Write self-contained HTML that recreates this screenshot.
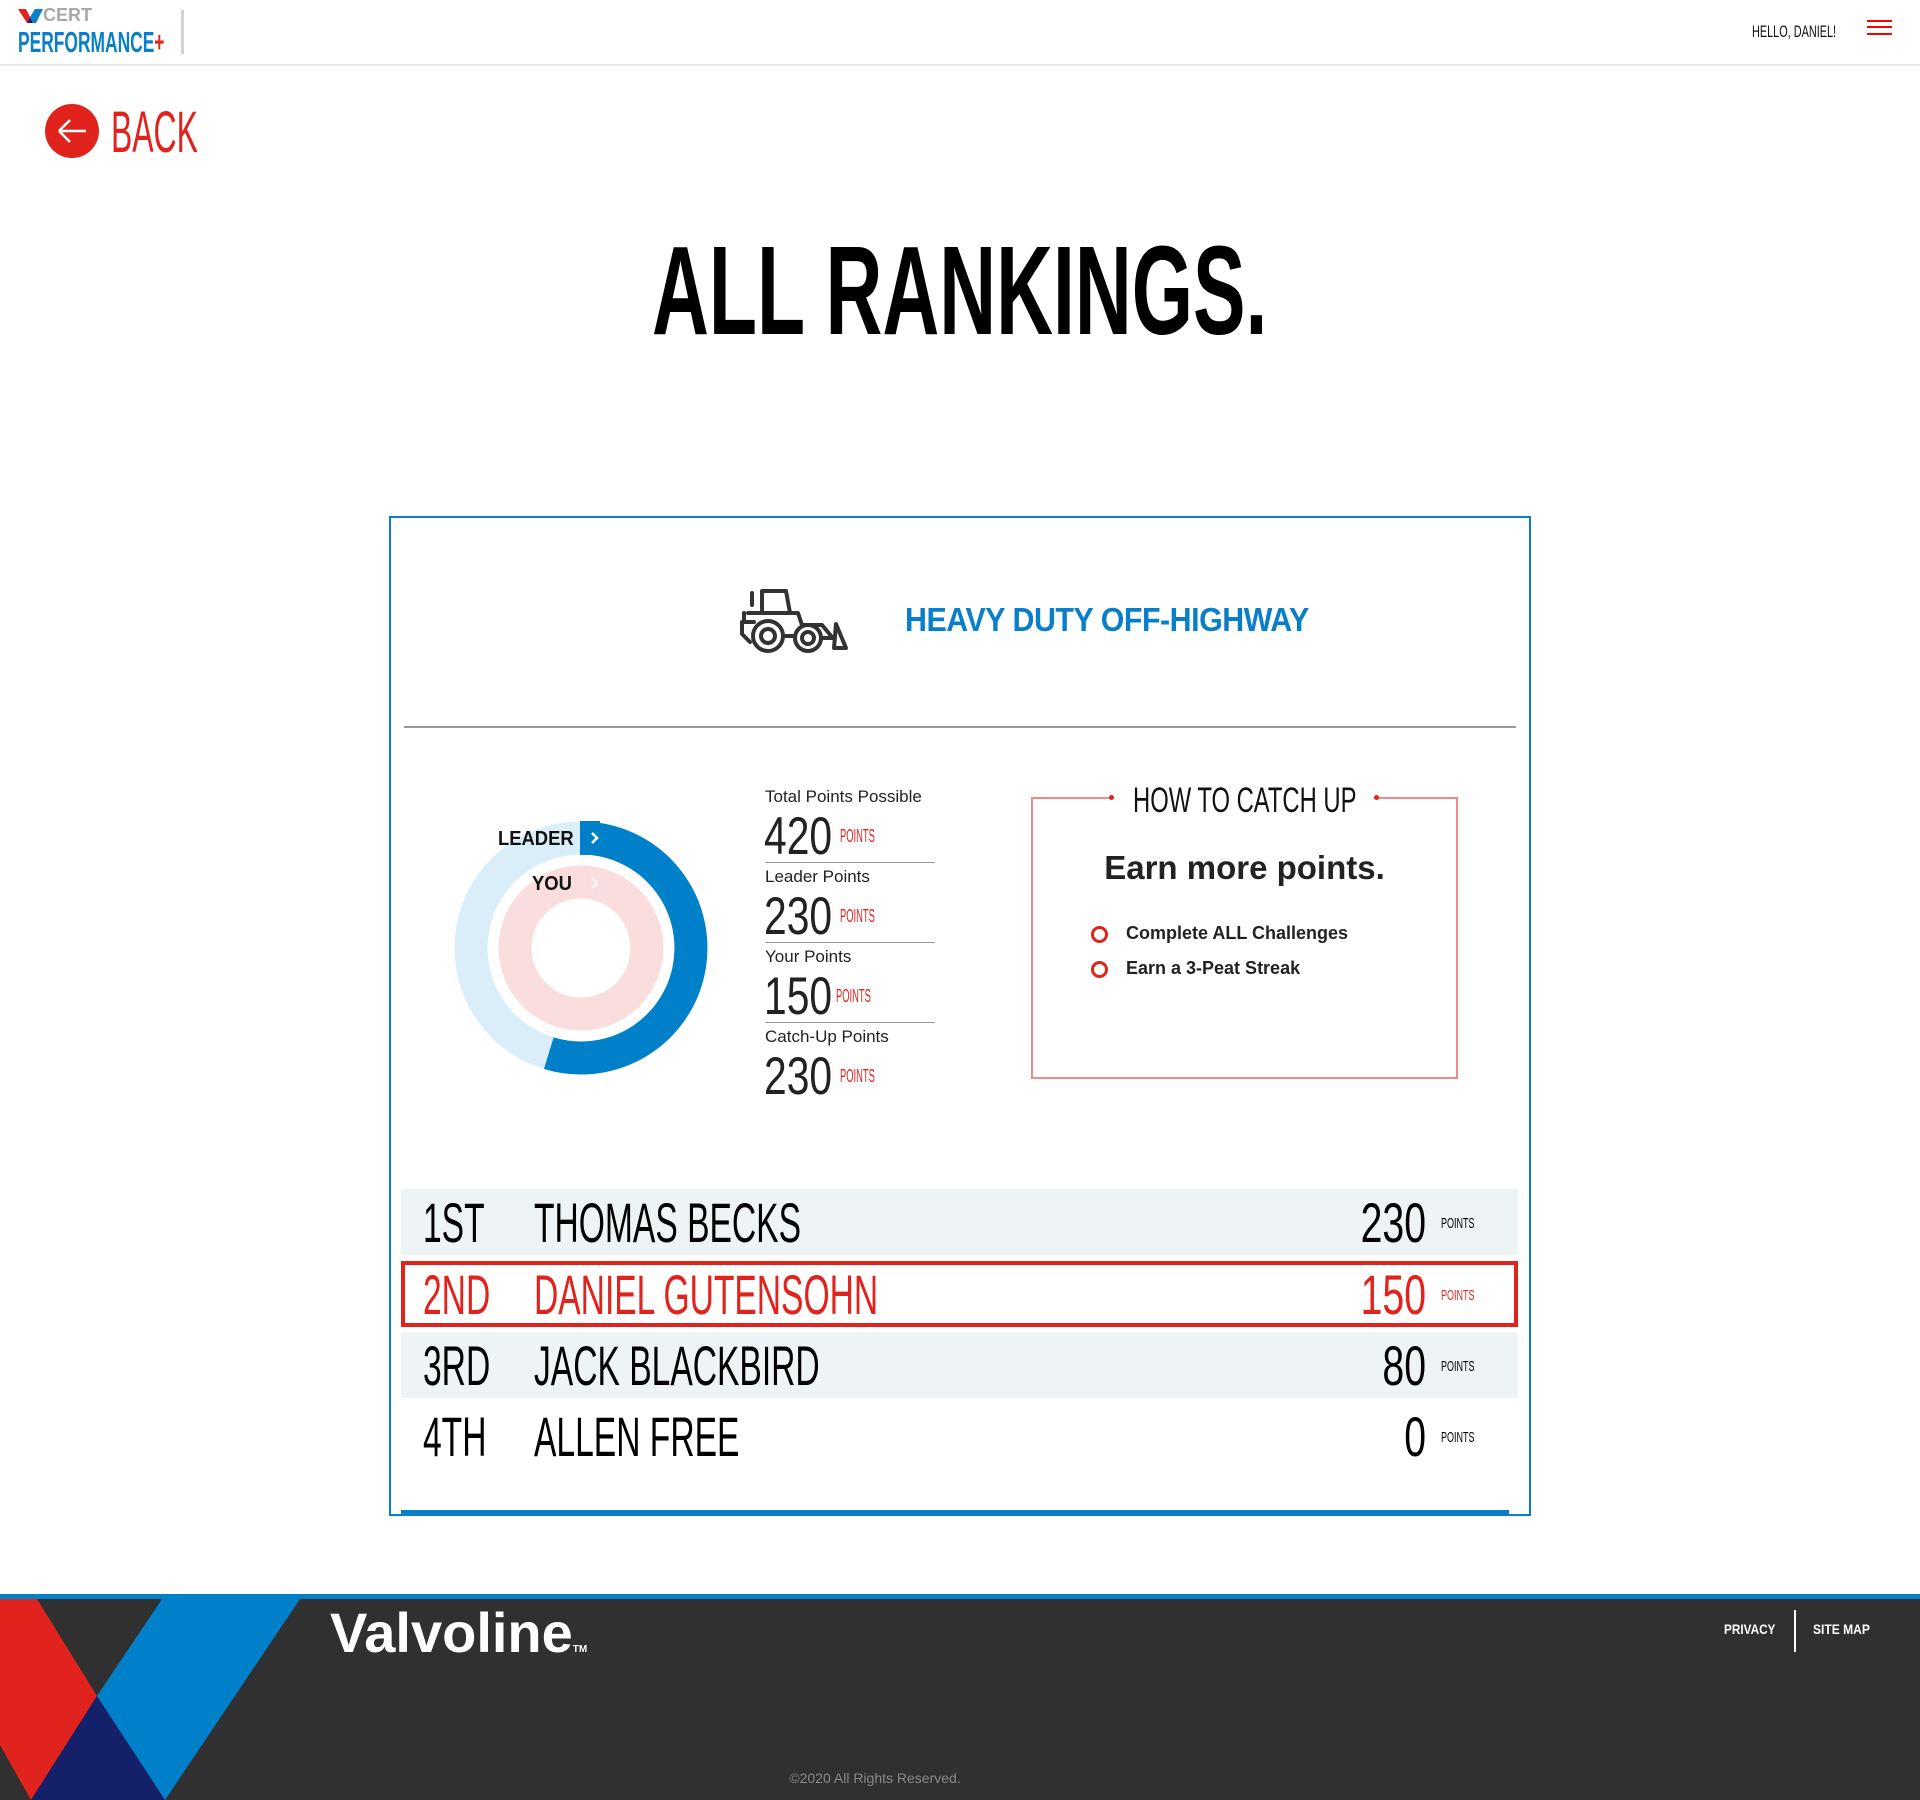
<!DOCTYPE html>
<html><head><meta charset="utf-8"><style>
*{margin:0;padding:0;box-sizing:border-box}
body{width:1920px;height:1800px;position:relative;background:#fff;font-family:"Liberation Sans",sans-serif;overflow:hidden;color:#111}
.a{position:absolute;white-space:nowrap}
.l{transform-origin:left top}
.r{transform-origin:right top}
.rk{font-size:56px;transform:scaleX(.6);line-height:1}
.nm{font-size:56px;transform:scaleX(.6);line-height:1;text-align:right;width:300px}
.pp{font-size:15px;transform:scaleX(.6);line-height:1}
.sn{font-size:53px;transform:scaleX(.77);line-height:1;color:#222}
.sp{font-size:18px;transform:scaleX(.52);line-height:1;color:#e0231c}
.sl{font-size:17px;color:#222}
</style></head><body>
<!-- header -->
<div class="a" style="left:0;top:64px;width:1920px;height:2px;background:#e8e8e8"></div>
<svg class="a" style="left:18px;top:9px" width="26" height="14" viewBox="0 0 26 14"><polygon points="0,0 8,0 12,8 9,14" fill="#e0231c"/><polygon points="12,8 9,14 15,14" fill="#14206a"/><polygon points="17,0 25,0 18,14 15,14 12,8" fill="#0a7fc9"/></svg>
<div class="a" style="left:43px;top:5px;font-size:18px;font-weight:bold;color:#a8a8a8">CERT</div>
<div class="a l" style="left:18px;top:29px;font-size:29px;font-weight:bold;color:#0a7fc9;transform:scaleX(.6);line-height:1">PERFORMANCE<span style="color:#e0231c">+</span></div>
<div class="a" style="left:181px;top:10px;width:3px;height:44px;background:#d4d4d4"></div>
<div class="a l" style="left:1752px;top:23px;font-size:17px;color:#111;transform:scaleX(.64);line-height:1">HELLO, DANIEL!</div>
<div class="a" style="left:1867px;top:20px;width:25px;height:2px;background:#f00"></div>
<div class="a" style="left:1867px;top:26px;width:25px;height:2px;background:#f00"></div>
<div class="a" style="left:1867px;top:33px;width:25px;height:2px;background:#f00"></div>
<!-- back -->
<svg class="a" style="left:45px;top:104px" width="54" height="54" viewBox="0 0 54 54"><circle cx="27" cy="27" r="27" fill="#e0231c"/><path d="M14 27H41M14 27L25 16M14 27L25 38" stroke="#fff" stroke-width="2.5" fill="none"/></svg>
<div class="a l" style="left:111px;top:104px;font-size:58px;color:#e0231c;transform:scaleX(.55);line-height:1">BACK</div>
<!-- title -->
<div class="a l" style="left:652px;top:228px;font-size:126px;font-weight:bold;color:#000;transform:scaleX(.625);line-height:1">ALL RANKINGS.</div>
<!-- card -->
<div class="a" style="left:389px;top:516px;width:1142px;height:1000px;border:2px solid #0a7fc9"></div>
<svg class="a" style="left:738px;top:582px" width="116" height="72" viewBox="0 0 116 72" fill="none" stroke="#333" stroke-width="4" stroke-linejoin="round" stroke-linecap="round"><path d="M14 11v12M24 9h24l4 22M24 9v22h28M10 31h50l4 12h20l10 12M4 40h12M4 40v12l8 8M6 31v9"/><circle cx="30" cy="54" r="15"/><circle cx="30" cy="54" r="7"/><circle cx="70" cy="56" r="13"/><circle cx="70" cy="56" r="6"/><path d="M46 54h10M84 56h12M98 42l10 24H96z"/></svg>
<div class="a l" style="left:905px;top:601px;font-size:33px;font-weight:bold;color:#0a7fc9;letter-spacing:-0.5px;transform:scaleX(.92)">HEAVY DUTY OFF-HIGHWAY</div>
<div class="a" style="left:404px;top:726px;width:1112px;height:2px;background:#999"></div>
<!-- donut -->
<svg class="a" style="left:450px;top:817px" width="262" height="262" viewBox="0 0 262 262">
<circle cx="131" cy="131" r="110" fill="none" stroke="#d9eef8" stroke-width="33"/>
<path d="M131 21 A110 110 0 1 1 98.8 236.2" fill="none" stroke="#0080c8" stroke-width="33"/>
<circle cx="131" cy="131" r="66" fill="none" stroke="#fadedd" stroke-width="33"/>
<rect x="130" y="4" width="20" height="34" fill="#0080c8"/>
<path d="M142 16l5 5-5 5" stroke="#fff" stroke-width="2.5" fill="none"/>
<path d="M142 61l5 5-5 5" stroke="#fff" stroke-width="2" fill="none"/>
</svg>
<div class="a l" style="left:498px;top:828px;font-size:20px;font-weight:bold;color:#111;transform:scaleX(.92)">LEADER</div>
<div class="a l" style="left:532px;top:873px;font-size:20px;font-weight:bold;color:#111;transform:scaleX(.92)">YOU</div>
<!-- stats -->
<div class="a sl" style="left:765px;top:787px">Total Points Possible</div>
<div class="a l sn" style="left:764px;top:810px">420</div>
<div class="a l sp" style="left:840px;top:827px">POINTS</div>
<div class="a" style="left:765px;top:862px;width:170px;height:1px;background:#999"></div>
<div class="a sl" style="left:765px;top:867px">Leader Points</div>
<div class="a l sn" style="left:764px;top:890px">230</div>
<div class="a l sp" style="left:840px;top:907px">POINTS</div>
<div class="a" style="left:765px;top:942px;width:170px;height:1px;background:#999"></div>
<div class="a sl" style="left:765px;top:947px">Your Points</div>
<div class="a l sn" style="left:764px;top:970px">150</div>
<div class="a l sp" style="left:836px;top:987px">POINTS</div>
<div class="a" style="left:765px;top:1022px;width:170px;height:1px;background:#999"></div>
<div class="a sl" style="left:765px;top:1027px">Catch-Up Points</div>
<div class="a l sn" style="left:764px;top:1050px">230</div>
<div class="a l sp" style="left:840px;top:1067px">POINTS</div>
<!-- catch up -->
<div class="a" style="left:1031px;top:797px;width:427px;height:282px;border:2px solid #f08a8a;border-top:none"></div>
<div class="a" style="left:1031px;top:797px;width:80px;height:2px;background:#f08a8a"></div>
<div class="a" style="left:1376px;top:797px;width:82px;height:2px;background:#f08a8a"></div>
<div class="a" style="left:1109px;top:795px;width:5px;height:5px;border-radius:50%;background:#e0231c"></div>
<div class="a" style="left:1374px;top:795px;width:5px;height:5px;border-radius:50%;background:#e0231c"></div>
<div class="a l" style="left:1133px;top:783px;font-size:35px;color:#111;transform:scaleX(.68);line-height:1">HOW TO CATCH UP</div>
<div class="a" style="left:1031px;width:427px;text-align:center;top:849px;font-size:33px;font-weight:bold;color:#222">Earn more points.</div>
<div class="a" style="left:1091px;top:926px;width:17px;height:17px;border:3px solid #e0231c;border-radius:50%"></div>
<div class="a" style="left:1126px;top:923px;font-size:18px;font-weight:bold;color:#222">Complete ALL Challenges</div>
<div class="a" style="left:1091px;top:961px;width:17px;height:17px;border:3px solid #e0231c;border-radius:50%"></div>
<div class="a" style="left:1126px;top:958px;font-size:18px;font-weight:bold;color:#222">Earn a 3-Peat Streak</div>
<!-- rows -->
<div class="a" style="left:401px;top:1189px;width:1117px;height:66px;background:#eef3f6"></div>
<div class="a" style="left:401px;top:1261px;width:1117px;height:66px;border:4px solid #e0231c"></div>
<div class="a" style="left:401px;top:1332px;width:1117px;height:66px;background:#eef3f6"></div>

<div class="a l rk" style="left:423px;top:1195px;color:#000">1ST</div>
<div class="a l rk" style="left:534px;top:1195px;color:#000">THOMAS BECKS</div>
<div class="a r nm" style="left:1126px;top:1195px;color:#000;transform:scaleX(.7)">230</div>
<div class="a l pp" style="left:1441px;top:1216px;color:#000">POINTS</div>

<div class="a l rk" style="left:423px;top:1267px;color:#e0231c">2ND</div>
<div class="a l rk" style="left:534px;top:1267px;color:#e0231c">DANIEL GUTENSOHN</div>
<div class="a r nm" style="left:1126px;top:1267px;color:#e0231c;transform:scaleX(.7)">150</div>
<div class="a l pp" style="left:1441px;top:1288px;color:#e0231c">POINTS</div>

<div class="a l rk" style="left:423px;top:1338px;color:#000">3RD</div>
<div class="a l rk" style="left:534px;top:1338px;color:#000">JACK BLACKBIRD</div>
<div class="a r nm" style="left:1126px;top:1338px;color:#000;transform:scaleX(.7)">80</div>
<div class="a l pp" style="left:1441px;top:1359px;color:#000">POINTS</div>

<div class="a l rk" style="left:423px;top:1409px;color:#000">4TH</div>
<div class="a l rk" style="left:534px;top:1409px;color:#000">ALLEN FREE</div>
<div class="a r nm" style="left:1126px;top:1409px;color:#000;transform:scaleX(.7)">0</div>
<div class="a l pp" style="left:1441px;top:1430px;color:#000">POINTS</div>

<div class="a" style="left:401px;top:1510px;width:1108px;height:6px;background:#0a7fc9"></div>
<!-- footer -->
<div class="a" style="left:0;top:1594px;width:1920px;height:6px;background:#0080c8"></div>
<div class="a" style="left:0;top:1599px;width:1920px;height:201px;background:#303030"></div>
<svg class="a" style="left:0;top:1599px" width="320" height="201" viewBox="0 0 320 201">
<polygon points="0,0 37,0 97,97 31,201 0,146" fill="#e0231c"/>
<polygon points="97,97 31,201 165,201" fill="#14206a"/>
<polygon points="162,0 300,0 165,201 97,97" fill="#0080c8"/>
</svg>
<div class="a" style="left:330px;top:1600px;font-size:56px;font-weight:bold;color:#fff;letter-spacing:0">Valvoline<span style="font-size:10px">TM</span></div>
<div class="a l" style="left:1724px;top:1621px;font-size:14px;font-weight:bold;color:#fff;transform:scaleX(.84)">PRIVACY</div>
<div class="a" style="left:1794px;top:1610px;width:2px;height:42px;background:#fff"></div>
<div class="a l" style="left:1813px;top:1621px;font-size:14px;font-weight:bold;color:#fff;transform:scaleX(.86)">SITE MAP</div>
<div class="a" style="left:0;width:1750px;text-align:center;top:1770px;font-size:14px;color:#888">©2020 All Rights Reserved.</div>
</body></html>
